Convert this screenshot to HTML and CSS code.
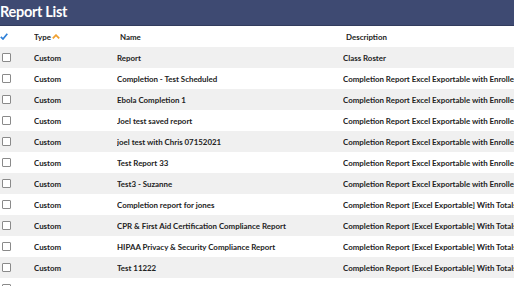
FILE: index.html
```html
<!DOCTYPE html>
<html lang="en">

<head>
    <meta charset="UTF-8">
    <meta name="viewport" content="width=device-width, initial-scale=1.0">
    <title>Report List</title>
    <link rel="stylesheet" href="styles.css">
</head>

<body>
    <div class="title-bar">
        <h1 class="title">Report List</h1>
    </div>
    <table class="report-table">
        <colgroup>
            <col class="col-check">
            <col class="col-type">
            <col class="col-name">
            <col class="col-desc">
        </colgroup>
        <thead>
            <tr>
                <th class="cell-check">
                    <svg class="check-all" width="8" height="7" viewBox="0 0 8 7"><path d="M0.8 3.8 L3 6 L7.3 0.8" fill="none" stroke="#2f80d8" stroke-width="1.7"/></svg>
                </th>
                <th class="sortable">Type<svg class="sort-up" width="8" height="5" viewBox="0 0 8 5"><path d="M0.8 4.3 L4 1.2 L7.2 4.3" fill="none" stroke="#f0a030" stroke-width="1.8"/></svg></th>
                <th>Name</th>
                <th>Description</th>
            </tr>
        </thead>
        <tbody>
            <tr><td class="cell-check"><span class="box"></span></td><td>Custom</td><td>Report</td><td>Class Roster</td></tr>
            <tr><td class="cell-check"><span class="box"></span></td><td>Custom</td><td>Completion - Test Scheduled</td><td>Completion Report Excel Exportable with Enrollee Details</td></tr>
            <tr><td class="cell-check"><span class="box"></span></td><td>Custom</td><td>Ebola Completion 1</td><td>Completion Report Excel Exportable with Enrollee Details</td></tr>
            <tr><td class="cell-check"><span class="box"></span></td><td>Custom</td><td>Joel test saved report</td><td>Completion Report Excel Exportable with Enrollee Details</td></tr>
            <tr><td class="cell-check"><span class="box"></span></td><td>Custom</td><td>joel test with Chris 07152021</td><td>Completion Report Excel Exportable with Enrollee Details</td></tr>
            <tr><td class="cell-check"><span class="box"></span></td><td>Custom</td><td>Test Report 33</td><td>Completion Report Excel Exportable with Enrollee Details</td></tr>
            <tr><td class="cell-check"><span class="box"></span></td><td>Custom</td><td>Test3 - Suzanne</td><td>Completion Report Excel Exportable with Enrollee Details</td></tr>
            <tr><td class="cell-check"><span class="box"></span></td><td>Custom</td><td>Completion report for jones</td><td>Completion Report [Excel Exportable] With Totals</td></tr>
            <tr><td class="cell-check"><span class="box"></span></td><td>Custom</td><td>CPR &amp; First Aid Certification Compliance Report</td><td>Completion Report [Excel Exportable] With Totals</td></tr>
            <tr><td class="cell-check"><span class="box"></span></td><td>Custom</td><td>HIPAA Privacy &amp; Security Compliance Report</td><td>Completion Report [Excel Exportable] With Totals</td></tr>
            <tr><td class="cell-check"><span class="box"></span></td><td>Custom</td><td>Test 11222</td><td>Completion Report [Excel Exportable] With Totals</td></tr>
            <tr><td class="cell-check"><span class="box"></span></td><td>Custom</td><td>Test 111115</td><td>Completion Report [Excel Exportable] With Totals</td></tr>
        </tbody>
    </table>
</body>

</html>
```

FILE: styles.css
```css
body {
    margin: 0;
    font-family: Lato, "Open Sans", sans-serif;
    color: #222;
    background-color: white;
    overflow: hidden;
}

.title-bar {
    height: 26px;
    padding-top: 2px;
    background-color: #3e4a72;
    border-bottom: 1px solid #323c5e;
    box-sizing: border-box;
}

.title {
    margin: 0;
    font-size: 14.5px;
    line-height: 19px;
    letter-spacing: -0.3px;
    font-weight: 700;
    color: white;
}

.report-table {
    width: 560px;
    border-collapse: collapse;
    table-layout: fixed;
    font-size: 7.9px;
    font-weight: 700;
}

.col-check {
    width: 34px;
}

.col-type {
    width: 83px;
}

.col-name {
    width: 226px;
}

.report-table th,
.report-table td {
    height: 21px;
    padding: 0;
    text-align: left;
    white-space: nowrap;
    overflow: hidden;
    box-sizing: border-box;
}

.report-table th {
    padding-left: 3px;
    font-weight: 700;
}

.report-table th.sortable {
    padding-left: 0;
}

.report-table tbody tr:nth-child(odd) {
    background-color: #f0f0f0;
}

.cell-check {
    padding-left: 2px !important;
}

.check-all {
    display: block;
    margin-left: -2px;
}

.box {
    display: block;
    width: 9px;
    height: 9px;
    border: 1px solid #8a8a8a;
    border-radius: 1px;
    background-color: white;
    box-sizing: border-box;
}

.sort-up {
    margin-left: 1px;
    vertical-align: 1px;
}
```
